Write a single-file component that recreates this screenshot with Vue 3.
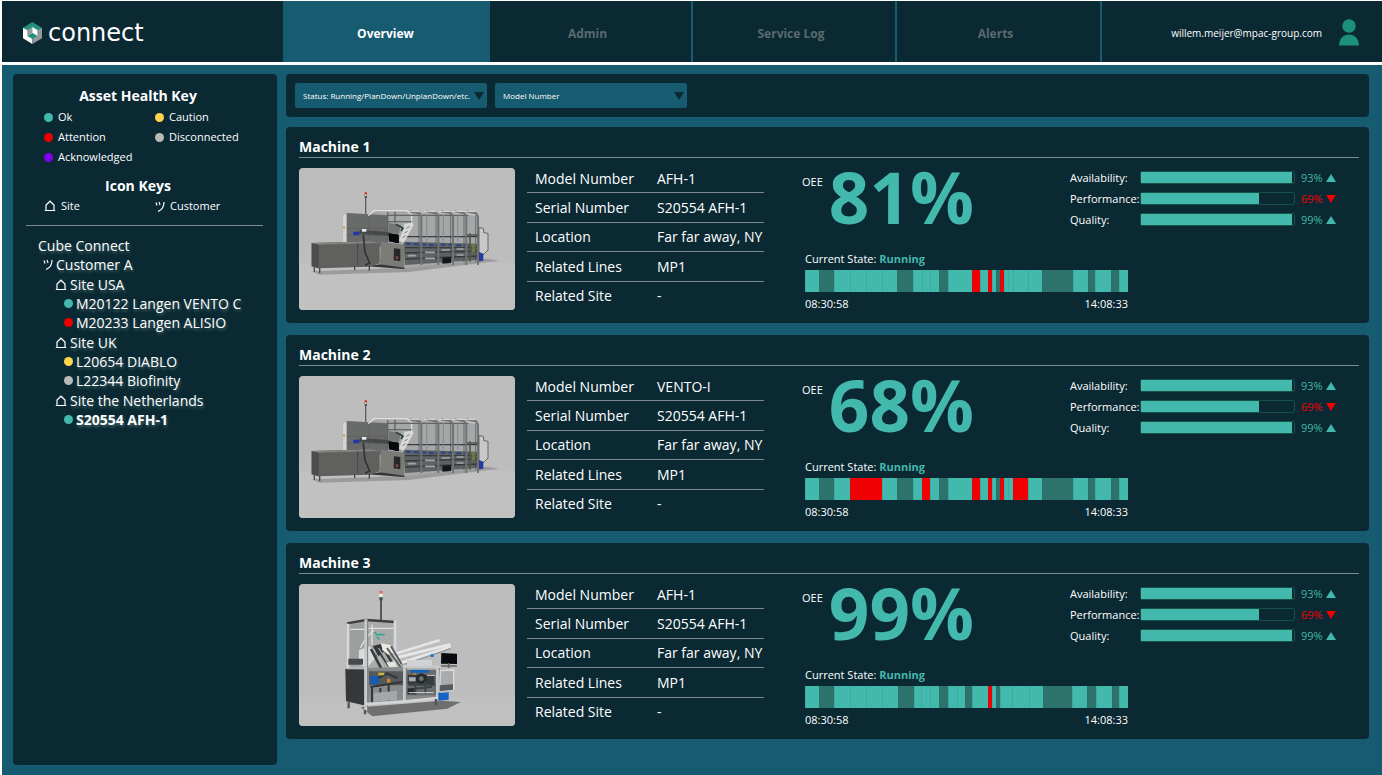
<script setup>
import { ref } from 'vue'

const tabs = ['Overview', 'Admin', 'Service Log', 'Alerts']
const activeTab = ref('Overview')

const healthKeys = [
  { label: 'Ok', tone: 'ok' },
  { label: 'Caution', tone: 'caution' },
  { label: 'Attention', tone: 'attention' },
  { label: 'Disconnected', tone: 'disconnected' },
  { label: 'Acknowledged', tone: 'acknowledged' },
]

const sites = [
  {
    name: 'Site USA',
    assets: [
      { name: 'M20122 Langen VENTO C', tone: 'ok' },
      { name: 'M20233 Langen ALISIO', tone: 'attention' },
    ],
  },
  {
    name: 'Site UK',
    assets: [
      { name: 'L20654 DIABLO', tone: 'caution' },
      { name: 'L22344 Biofinity', tone: 'disconnected' },
    ],
  },
  {
    name: 'Site the Netherlands',
    assets: [{ name: 'S20554 AFH-1', tone: 'ok', current: true }],
  },
]

// Timeline segments: state letter (r = running, d = planned stop, x = fault) and length
const parse = (text) =>
  text.split(' ').map((part) => ({ state: part[0], length: Number(part.slice(1)) }))

const details = (model) => [
  ['Model Number', model],
  ['Serial Number', 'S20554 AFH-1'],
  ['Location', 'Far far away, NY'],
  ['Related Lines', 'MP1'],
  ['Related Site', '-'],
]

const metrics = [
  { label: 'Availability:', value: '93%', fill: 99, up: true },
  { label: 'Performance:', value: '69%', fill: 77, up: false },
  { label: 'Quality:', value: '99%', fill: 99, up: true },
]

const machines = [
  {
    name: 'Machine 1',
    art: 'line',
    oee: '81%',
    rows: details('AFH-1'),
    timeline: parse('r41 d47 r48 r47 r47 r46 d48 r26 r25 r26 d27 r73 x23 r24 x13 r12 d12 x13 r12 r15 r44 r43 d91 r45 d23 r48 d24 r26'),
  },
  {
    name: 'Machine 2',
    art: 'line',
    oee: '68%',
    rows: details('VENTO-I'),
    timeline: parse('r41 d47 r47 x95 r46 d48 r26 x25 r26 d27 r73 x23 r24 x13 r12 d12 x13 r12 r15 x44 r43 d91 r45 d23 r48 d24 r26'),
  },
  {
    name: 'Machine 3',
    art: 'cell',
    oee: '99%',
    rows: details('AFH-1'),
    timeline: parse('r41 d47 r48 r47 r48 r47 d48 r23 r26 r26 d29 r25 r24 d22 r47 x12 r12 d14 r35 r51 r43 d87 r45 d25 r48 d23 r26'),
  },
]
</script>

<template>
  <div class="page">
    <header class="topbar">
      <a class="brand" href="#" aria-label="connect">
        <svg class="brand-mark" viewBox="0 0 57 66" aria-hidden="true">
          <path d="M28 0 57 17 28 33 0 17Z" fill="#259079" />
          <path d="M0 17 28 33V66L0 49Z" fill="#fff" />
          <path d="M57 17 28 33V66L57 49Z" fill="#8f9a9d" />
          <path d="M28 15 13 24V42L28 33Z" fill="#929c9f" />
          <path d="M28 15 43 24V42L28 33Z" fill="#fff" />
          <path d="M28 33 43 42 28 51 13 42Z" fill="#259079" />
        </svg>
        <span class="brand-name">connect</span>
      </a>
      <nav class="tabs" aria-label="Main">
        <button
          v-for="tab in tabs"
          :key="tab"
          type="button"
          class="tab"
          :class="{ active: tab === activeTab }"
          @click="activeTab = tab"
        >{{ tab }}</button>
      </nav>
      <div class="user">
        <span>willem.meijer@mpac-group.com</span>
        <svg class="avatar" viewBox="0 0 20 27" aria-hidden="true">
          <circle cx="10" cy="7" r="6.7" />
          <path d="M0 26.500C0 11.800 20 11.800 20 26.500Z" />
        </svg>
      </div>
    </header>

    <main class="body">
      <aside class="panel sidebar">
        <h2 class="key-title">Asset Health Key</h2>
        <ul class="keys">
          <li v-for="key in healthKeys" :key="key.label" class="key">
            <span class="dot" :class="key.tone"></span>{{ key.label }}
          </li>
        </ul>
        <h2 class="key-title icon-title">Icon Keys</h2>
        <ul class="keys icons">
          <li class="key">
            <svg class="house" viewBox="0 0 12 12" aria-hidden="true"><path d="M2 10.500V5L6 1.200l4 3.800V10.500M.8 10.500H11.200" /></svg>
            Site
          </li>
          <li class="key">
            <svg class="people" viewBox="0 0 10 11" aria-hidden="true"><path d="M1 1.500 2 4.500M4 1 5 4M9 1C9 6 7 9 3 10.500" /></svg>
            Customer
          </li>
        </ul>
        <div class="tree">
          <a href="#" class="node">Cube Connect</a>
          <a href="#" class="node customer">
            <svg class="people" viewBox="0 0 10 11" aria-hidden="true"><path d="M1 1.500 2 4.500M4 1 5 4M9 1C9 6 7 9 3 10.500" /></svg>Customer A
          </a>
          <div v-for="site in sites" :key="site.name" class="site-group">
            <a href="#" class="node site">
              <svg class="house" viewBox="0 0 12 12" aria-hidden="true"><path d="M2 10.500V5L6 1.200l4 3.800V10.500M.8 10.500H11.200" /></svg>{{ site.name }}
            </a>
            <a
              v-for="asset in site.assets"
              :key="asset.name"
              href="#"
              class="node asset"
              :class="{ current: asset.current }"
            ><span class="dot" :class="asset.tone"></span>{{ asset.name }}</a>
          </div>
        </div>
      </aside>

      <section class="content">
        <div class="panel filters">
          <div class="select">
            <select aria-label="Status"><option>Status: Running/PlanDown/UnplanDown/etc.</option></select>
          </div>
          <div class="select">
            <select aria-label="Model Number"><option>Model Number</option></select>
          </div>
        </div>

        <article v-for="machine in machines" :key="machine.name" class="panel card">
          <h2 class="card-title">{{ machine.name }}</h2>
          <div class="card-body">
            <svg v-if="machine.art === 'line'" class="photo" viewBox="0 0 648 426" role="img" :aria-label="machine.name">
              <rect width="648" height="426" fill="#bdbdbd" />
              <path d="M0 285H648V426H0Z" fill="#c1c1c1" />
              <path d="M40 310 300 300 565 272 600 278 330 312 60 320Z" fill="#9b9b9b" />
              <g transform="translate(-12 -9)">
                <path d="M212 90V150" stroke="#5c5f60" stroke-width="4" />
                <path d="M209 82h7v7h-7z" fill="#d82d24" /><path d="M209 91h7v8h-7z" fill="#4a5554" />
                <path d="M210 89h5v3h-5z" fill="#fff" />
                <path d="M222 150 248 136 520 150 552 155V287L330 310 222 292Z" fill="#a6a7a8" />
                <path d="M325 230 550 236V285L330 300Z" fill="#5f6264" />
                <path d="M330 215H550M330 248H550M330 264 550 258M330 282 550 273" stroke="#383b3d" stroke-width="4" />
                <path d="M338 272H362M390 262H420M390 280H420M440 255H465M485 252H508M485 270H508" stroke="#a2a5a6" stroke-width="5" />
                <path d="M333 236 430 241M438 238 520 242" stroke="#263c92" stroke-width="5" stroke-dasharray="14 9" />
                <path d="M142 152 155 144 279 151V235L258 245 142 231Z" fill="#696b6a" />
                <path d="M142 152 155 144V232L142 231Z" fill="#d3d4d3" />
                <path d="M155 190H277M155 210H277M222 150V225" stroke="#5b5d5b" stroke-width="2" />
                <path d="M144 185h6v5h-6z" fill="#d38b27" />
                <path d="M220 152 236 137H335L350 150V174" stroke="#dedede" stroke-width="4" fill="none" />
                <path d="M278 142V235M300 140V175M278 170H350M278 151 520 151" stroke="#626565" stroke-width="4" />
                <g v-for="x in [379, 430, 474, 514, 549]" :key="x" fill="none">
                  <path :d="`M${x - 36} 139 ${x - 5} 145 ${x} 155V300`" stroke="#707373" stroke-width="6" />
                  <path :d="`M${x - 7} 150V292`" stroke="#4b4e50" stroke-width="2" />
                  <path :d="`M${x - 42} 139H${x - 10}`" stroke="#e0e0e0" stroke-width="3" />
                </g>
                <path d="M395 150V232M445 150V230M488 150V230" stroke="#868989" stroke-width="3" />
                <path d="M280 174 318 180 312 206H280Z" fill="#747776" />
                <path d="M328 176 352 173 356 180 326 234 312 226 322 200Z" fill="#d8d9d7" />
                <path d="M334 190 345 184M328 204 338 199M322 218 332 212" stroke="#7e8584" stroke-width="3" />
                <path d="M302 178 324 190 318 198" stroke="#2b433b" stroke-width="5" fill="none" />
                <path d="M194 195 281 201V212L192 207Z" fill="#464849" />
                <path d="M175 200h17v11h-17z" fill="#1f39aa" /><path d="M201 192h13v8h-13z" fill="#e8e8e8" />
                <path d="M281 205 311 209V235L282 229Z" fill="#08090a" />
                <path d="M258 230 328 239V311L255 298Z" fill="#7b7c78" />
                <path d="M281 205 311 209V235L282 229Z" fill="#08090a" />
                <path d="M255 298 328 308V312L215 304Z" fill="#343536" />
                <path d="M297 250 316 252V289L296 286Z" fill="#252729" /><path d="M302 274h8v9h-8z" fill="#7b4a33" />
                <path d="M50 234 225 229 254 234V295L225 305 71 310 50 304Z" fill="#60615f" />
                <path d="M50 234 71 239V310L50 304Z" fill="#4b4d4c" />
                <path d="M50 234 225 229 254 234 71 239Z" fill="#83847f" />
                <path d="M188 234V300" stroke="#434443" stroke-width="3" />
                <path d="M205 210 210 262 224 294 210 301" stroke="#303234" stroke-width="5" fill="none" />
                <path d="M58 305V322M74 308V325M179 301V316M223 302V317" stroke="#484949" stroke-width="4" />
                <path d="M552 187 566 191V203L579 205V255L565 269 552 272Z" fill="#c7c8c9" stroke="#666" stroke-width="3" />
                <path d="M525 205V290M515 210H552" stroke="#535749" stroke-width="5" />
                <path d="M530 237h11v25h-11z" fill="#6f7538" />
                <path d="M552 261 565 266V287L552 289Z" fill="#233c9a" />
                <path d="M442 278 468 276V294L442 296Z" fill="#151719" />
              </g>
            </svg>
            <svg v-else class="photo" viewBox="0 0 648 426" role="img" :aria-label="machine.name">
              <rect width="648" height="426" fill="#bdbdbd" />
              <path d="M0 340H648V426H0Z" fill="#c0c0c0" />
              <path d="M185 370 430 350 485 354 445 374 220 397Z" fill="#6f6f6f" />
              <g transform="translate(-16 -18)">
                <path d="M262 63V190" stroke="#575a5b" stroke-width="6" />
                <path d="M257 39h10v8h-10z" fill="#e6695f" /><path d="M257 47h10v10h-10z" fill="#eee" />
                <path d="M257 58h10v9h-10z" fill="#48504f" />
                <path d="M158 133 220 124 304 130V270H160Z" fill="#aaabab" />
                <path d="M164 142 214 132V262H164Z" fill="#9d9f9f" />
                <path d="M160 136 218 126 304 132" stroke="#3c3f41" stroke-width="7" fill="none" />
                <path d="M163 137V272M304 127V270" stroke="#d7d8d9" stroke-width="8" />
                <path d="M170 154H218M225 151H300M200 210 218 178 240 158M235 140V200" stroke="#e1e1e1" stroke-width="4" fill="none" />
                <path d="M242 162 250 170 273 170M249 177 258 184" stroke="#35a59a" stroke-width="5" fill="none" />
                <path d="M305 228 438 187M304 240 470 199M315 257 472 207" stroke="#e5e6e8" stroke-width="9" />
                <path d="M323 262 472 211" stroke="#92969a" stroke-width="4" />
                <path d="M305 232 440 191" stroke="#b9bdc1" stroke-width="2" />
                <path d="M340 246h75v18h-75z" fill="#d0d2d4" />
                <path d="M411 229h9v8h-9z" fill="#1670cf" />
                <path d="M196 216 230 205 245 240 220 270 195 258Z" fill="#d9dbdc" />
                <path d="M238 204 260 198 272 220 250 238Z" fill="#333638" />
                <path d="M248 208 286 264M266 205 302 266M232 213 266 278" stroke="#393c3e" stroke-width="8" />
                <path d="M255 210 290 268M240 212 274 274" stroke="#bfc1c2" stroke-width="3" />
                <path d="M263 196 292 202 302 224 283 230 266 216Z" fill="#ede9e1" />
                <path d="M292 205 324 259M280 210 328 278" stroke="#5a5d5e" stroke-width="6" />
                <path d="M278 254 300 250 310 268 292 276Z" fill="#e4e2dc" />
                <path d="M164 242H208V260H164Z" fill="#45494b" />
                <path d="M222 270 330 266 434 264V356L330 370 222 376Z" fill="#888b8c" />
                <path d="M226 280H330V322H226Z" fill="#55595b" />
                <path d="M336 274H428V352H336Z" fill="#686c6e" />
                <path d="M230 294h25v25h-25z" fill="#185bb5" /><path d="M350 275h55v9h-55z" fill="#1762b7" />
                <path d="M254 300 280 286 310 300M230 327 326 312M285 310V370M235 325V373M260 330V370" stroke="#333638" stroke-width="6" fill="none" />
                <path d="M240 345 310 338V366L240 371Z" fill="#a4a8aa" />
                <path d="M280 302h10v12h-10zM359 286h8v9h-8z" fill="#d38a26" />
                <path d="M254 284h18v8h-18z" fill="#cab63a" />
                <path d="M342 290H422V318H342Z" fill="#363b3d" />
                <circle cx="383" cy="302" r="16" fill="#24292b" />
                <circle cx="383" cy="302" r="7" fill="#6e7476" /><path d="M346 298h20v12h-20z" fill="#a6adb0" />
                <path d="M344 320H425M352 334 415 326M365 351V320M395 348V310" stroke="#3e4345" stroke-width="6" />
                <path d="M342 331h20v18h-20z" fill="#262d30" />
                <path d="M340 273H428M400 292H424M345 344H420" stroke="#d6d8da" stroke-width="3" />
                <path d="M155 272 212 274V384L157 371Z" fill="#35383b" />
                <path d="M157 271 217 271M157 372 217 386" stroke="#b8bbbd" stroke-width="5" />
                <path d="M217 124V400M333 260V374M432 261V366" stroke="#c7c9cb" stroke-width="10" />
                <path d="M222 124V400M338 264V372M437 264V363" stroke="#777a7c" stroke-width="3" />
                <path d="M217 378 334 370 434 360" stroke="#d2d4d6" stroke-width="8" fill="none" />
                <path d="M330 267H440" stroke="#c7c9ca" stroke-width="6" />
                <path d="M165 373V391M214 396V409M427 363V382" stroke="#505355" stroke-width="7" />
                <path d="M440 278 480 276V334L438 340Z" fill="#a9abad" stroke="#ddd" stroke-width="4" />
                <path d="M438 322 478 319V335L438 340Z" fill="#565a5d" />
                <path d="M434 345 465 343V365L434 368Z" fill="#1464c4" />
                <path d="M443 225 490 227V258L442 257Z" fill="#090a0d" />
                <path d="M465 255V270M442 264H490" stroke="#626568" stroke-width="5" />
              </g>
            </svg>

            <table class="details">
              <tbody>
                <tr v-for="[name, value] in machine.rows" :key="name">
                  <th scope="row">{{ name }}</th>
                  <td>{{ value }}</td>
                </tr>
              </tbody>
            </table>

            <div class="stats">
              <div class="stats-top">
                <div class="oee">
                  <span class="oee-label">OEE</span>
                  <strong class="oee-value">{{ machine.oee }}</strong>
                </div>
                <div class="metrics">
                  <div v-for="metric in metrics" :key="metric.label" class="metric">
                    <span class="metric-label">{{ metric.label }}</span>
                    <span class="track"><span class="fill" :style="{ width: metric.fill + '%' }"></span></span>
                    <span class="metric-value" :class="{ down: !metric.up }">
                      {{ metric.value }}<span class="trend"></span>
                    </span>
                  </div>
                </div>
              </div>
              <div class="state">
                <p class="state-text">Current State: <strong>Running</strong></p>
                <div class="timeline">
                  <span
                    v-for="(segment, index) in machine.timeline"
                    :key="index"
                    class="segment"
                    :class="segment.state"
                    :style="{ flexGrow: segment.length }"
                  ></span>
                </div>
                <div class="times"><span>08:30:58</span><span>14:08:33</span></div>
              </div>
            </div>
          </div>
        </article>
      </section>
    </main>
  </div>
</template>

<style>
body {
  margin: 0;
  background: #fff;
}
</style>

<style scoped>
* {
  box-sizing: border-box;
}

.page {
  display: flex;
  flex-direction: column;
  min-height: 100vh;
  border-top: 1px solid #fff;
  border-left: 2px solid #fff;
  background: #165b70;
  color: #fff;
  font-family: "Open Sans", "Noto Sans", sans-serif;
  font-size: 14px;
}

h2,
p,
ul {
  margin: 0;
  padding: 0;
}

ul {
  list-style: none;
}

a {
  color: inherit;
  text-decoration: none;
}

button,
select {
  font: inherit;
}

.topbar {
  display: grid;
  grid-template-columns: 281fr 819fr 280fr;
  height: 64px;
  border-bottom: 3px solid #fff;
  background: #0a2933;
}

.brand {
  display: flex;
  align-items: center;
  gap: 6px;
  padding: 2px 0 0 21px;
}

.brand-mark {
  width: 19px;
  height: 22px;
}

.brand-name {
  font-family: "DejaVu Sans", sans-serif;
  font-size: 24px;
  line-height: 28px;
}

.tabs {
  display: grid;
  grid-template-columns: 207fr 203fr 204fr 205fr;
}

.tab {
  padding: 3px 0 0;
  border: 0;
  border-right: 2px solid #165b70;
  background: transparent;
  color: #5b6a70;
  font-size: 12px;
  font-weight: 700;
}

.tab + .tab {
  padding-right: 6px;
}

.tab.active {
  background: #165b70;
  color: #fff;
}

.user {
  display: flex;
  align-items: center;
  justify-content: flex-end;
  gap: 17px;
  padding: 1px 23px 0 0;
  font-size: 10px;
}

.user span {
  padding-top: 2px;
}

.avatar {
  width: 20px;
  height: 27px;
  fill: #1b917b;
}

.body {
  display: flex;
  flex: 1;
  gap: 9px;
  padding: 9px 13px 10px 11px;
}

.panel {
  border-radius: 4px;
  background: #0a2933;
}

.sidebar {
  flex: none;
  width: 264px;
  padding: 12px 14px 12px 13px;
}

.key-title {
  padding-right: 13px;
  font-size: 14px;
  line-height: 20px;
  text-align: center;
}

.icon-title {
  margin-top: 9px;
}

.keys {
  display: grid;
  grid-template-columns: 111px 1fr;
  margin-top: 1px;
  padding-left: 18px;
  font-size: 11px;
  line-height: 20px;
}

.icons {
  margin-top: 0;
}

.key {
  display: flex;
  align-items: center;
  gap: 5px;
}

.dot {
  flex: none;
  width: 9px;
  height: 9px;
  border-radius: 50%;
}

.ok { background: #43b8ac; }
.caution { background: #ffd54c; }
.attention { background: #ef0000; }
.disconnected { background: #b9b9b9; }
.acknowledged { background: #8000f0; }

.house,
.people {
  flex: none;
  fill: none;
  stroke: #fff;
  stroke-width: 1.2;
}

.house {
  width: 12px;
  height: 12px;
}

.people {
  width: 10px;
  height: 11px;
}

.tree {
  margin-top: 9px;
  padding: 10px 0 0 12px;
  border-top: 1px solid #7d8b90;
}

.node {
  display: flex;
  align-items: center;
  gap: 3px;
  font-size: 14px;
  line-height: 19px;
  text-shadow: 1px 2px 3px rgba(190, 220, 205, 0.35);
}

.customer {
  padding: 0 0 1px 5px;
}

.site-group {
  padding-bottom: 1px;
}

.site {
  padding-left: 17px;
}

.asset {
  padding-left: 26px;
}

.current {
  font-weight: 700;
}

.content {
  display: flex;
  flex: 1;
  flex-direction: column;
  gap: 12px;
  min-width: 0;
}

.filters {
  display: flex;
  align-items: flex-start;
  gap: 8px;
  height: 43px;
  margin-bottom: -2px;
  padding: 9px;
}

.select {
  position: relative;
}

.select select {
  display: block;
  width: 192px;
  height: 25px;
  padding: 0 16px 0 8px;
  border: 0;
  border-radius: 2px;
  appearance: none;
  background: #165b70;
  color: #fff;
  font-size: 8px;
}

.select::after {
  position: absolute;
  top: 9px;
  right: 3px;
  border: 5px solid transparent;
  border-top: 8px solid #0a2933;
  border-bottom: 0;
  content: "";
  pointer-events: none;
}

.card {
  padding: 9px 10px 10px 13px;
}

.card-title {
  border-bottom: 1px solid #7d8b90;
  font-size: 14px;
  line-height: 21px;
}

.card-body {
  display: flex;
  margin-top: 6px;
}

.photo {
  flex: none;
  width: 216px;
  height: 142px;
  margin-top: 4px;
  border-radius: 4px;
}

.details {
  flex: none;
  width: 237px;
  height: 146px;
  margin: 0 38px 0 12px;
  border-collapse: collapse;
  font-size: 14px;
  line-height: 20px;
}

.details th,
.details td {
  padding: 1px 0 0;
  border-bottom: 1px solid #7d8b90;
  font-weight: 400;
  text-align: left;
  white-space: nowrap;
}

.details th {
  width: 130px;
  padding-left: 8px;
}

.details tr:last-child > * {
  border-bottom: 0;
}

.stats {
  flex: 1;
}

.stats-top {
  display: flex;
  height: 85px;
}

.oee {
  display: flex;
  flex: none;
  align-items: flex-start;
  gap: 6px;
  width: 268px;
}

.oee-label {
  padding-top: 10px;
  font-size: 11px;
  line-height: 16px;
}

.oee-value {
  color: #43b8ac;
  font-size: 71px;
  line-height: 66px;
}

.metrics {
  padding-top: 3px;
  font-size: 11px;
}

.metric {
  display: grid;
  grid-template-columns: 70px 155px 36px;
  align-items: center;
  height: 21px;
}

.metric-label {
  white-space: nowrap;
}

.track {
  height: 13px;
  border: 1px solid #155049;
  border-radius: 2px;
}

.fill {
  display: block;
  height: 100%;
  background: #43b8ac;
}

.metric-value {
  display: flex;
  align-items: center;
  gap: 3px;
  padding-left: 6px;
  color: #43b8ac;
}

.trend {
  border: 5px solid transparent;
  border-top: 0;
  border-bottom: 8px solid #43b8ac;
}

.down {
  color: #ef0000;
}

.down .trend {
  border-top: 8px solid #ef0000;
  border-bottom: 0;
}

.state {
  width: 326px;
  padding-left: 3px;
  font-size: 11px;
}

.state-text {
  line-height: 20px;
}

.state-text strong {
  color: #43b8ac;
}

.timeline {
  display: flex;
  height: 22px;
  margin-top: 1px;
}

.segment {
  flex: 1 1 0;
  box-shadow: inset 1px 0 rgba(20, 90, 90, 0.12);
}

.r { background: #43b8ac; }
.d { background: #2d736b; }
.x { background: #f00000; }

.times {
  display: flex;
  justify-content: space-between;
  margin-top: 3px;
  line-height: 18px;
}
</style>
